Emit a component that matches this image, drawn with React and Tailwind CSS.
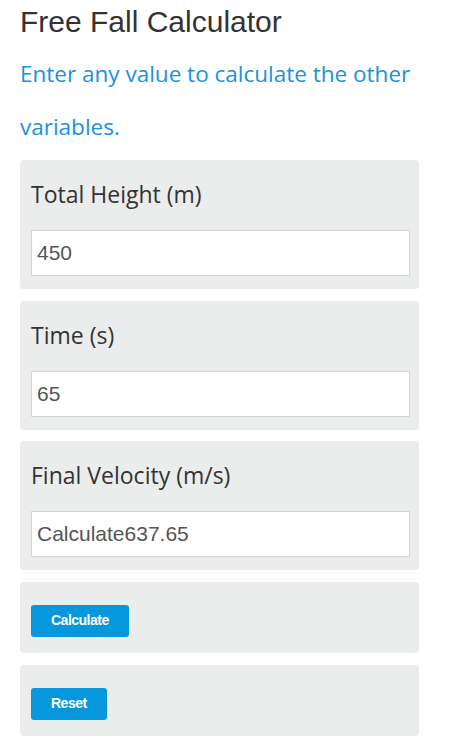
import React from "react";

function Field({ label, value }) {
  return (
    <div className="bg-[#ebecec] rounded-[4px] pt-[19px] pb-[13px] pl-[11px] pr-[9px]">
      <div className="text-[23px] leading-[31px] text-[#333] font-['Open_Sans',sans-serif]">{label}</div>
      <div className="mt-[20px] h-[46px] bg-white border border-[#d3d4d4] flex items-center pl-[5px] text-[21px] text-[#555] font-['Liberation_Sans',Arial,sans-serif]">
        {value}
      </div>
    </div>
  );
}

function ButtonPanel({ children }) {
  return (
    <div className="bg-[#ebecec] rounded-[4px] pt-[23px] pb-[16.5px] pl-[11px]">
      <button className="h-[32px] px-[20px] rounded-[3px] bg-[#0697dc] text-white text-[14px] tracking-[-0.5px] font-bold font-['Liberation_Sans',Arial,sans-serif]">
        {children}
      </button>
    </div>
  );
}

export default function App() {
  return (
    <div className="w-[450px] h-[739px] bg-white overflow-hidden">
      <div className="ml-[20px] w-[399px]">
        <h1 className="pt-[4px] text-[30px] leading-[36px] text-[#333] font-normal font-['Liberation_Sans',Arial,sans-serif]">
          Free Fall Calculator
        </h1>
        <p className="mt-[7px] w-[420px] text-[22.5px] leading-[53px] text-[#1a93dc] font-['Open_Sans',sans-serif]">
          Enter any value to calculate the other variables.
        </p>
        <div className="mt-[7px] flex flex-col gap-[11.5px]">
          <Field label="Total Height (m)" value="450" />
          <Field label="Time (s)" value="65" />
          <Field label="Final Velocity (m/s)" value="Calculate637.65" />
          <ButtonPanel>Calculate</ButtonPanel>
          <ButtonPanel>Reset</ButtonPanel>
        </div>
      </div>
    </div>
  );
}
